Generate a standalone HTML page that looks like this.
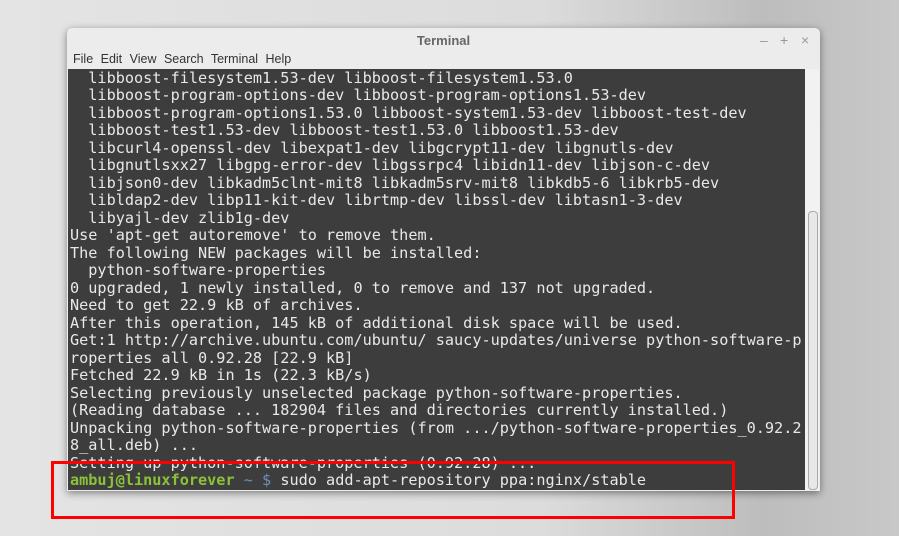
<!DOCTYPE html>
<html><head><style>
body{margin:0;width:899px;height:536px;overflow:hidden;background:linear-gradient(90deg,#e4e4e4 0%,#dcdcdc 60%,#bdbdbd 85%,#c8c8c8 100%);position:relative;font-family:"Liberation Sans",sans-serif}
.win{position:absolute;left:67px;top:28px;width:753px;height:463px;background:#ececec;border-radius:5px 5px 0 0;box-shadow:0 2px 8px rgba(0,0,0,.45)}
.title{position:absolute;left:0;right:0;top:5px;text-align:center;font-size:13px;font-weight:bold;color:#666}
.ctl{position:absolute;top:4px;font-size:14px;color:#999}
.menu{position:absolute;left:6px;top:24px;font-size:12.5px;color:#333;word-spacing:4px}
.term{position:absolute;left:1px;top:41px;width:737px;height:421px;background:#3d3d3d;overflow:hidden}
.sb{position:absolute;left:738px;top:41px;width:14px;height:421px;background:#f2f2f2}
.thumb{position:absolute;left:741px;top:183px;width:8px;height:277px;border:1px solid #aaa;border-radius:4px;background:#e8e8e8}
pre{margin:0;position:absolute;left:2px;top:1px;font-family:"DejaVu Sans Mono",monospace;font-size:15.2px;line-height:17.48px;color:#e8e8e8}
.g{color:#8ac33a;font-weight:bold}.b{color:#6b8fb8}
.red{position:absolute;left:51px;top:461px;width:678px;height:52px;border:3px solid #f00}
</style></head><body>
<div class="win">
<div class="title">Terminal</div>
<span class="ctl" style="left:693px">–</span><span class="ctl" style="left:713px">+</span><span class="ctl" style="left:734px">×</span>
<div class="menu">File Edit View Search Terminal Help</div>
<div class="term"><pre>  libboost-filesystem1.53-dev libboost-filesystem1.53.0
  libboost-program-options-dev libboost-program-options1.53-dev
  libboost-program-options1.53.0 libboost-system1.53-dev libboost-test-dev
  libboost-test1.53-dev libboost-test1.53.0 libboost1.53-dev
  libcurl4-openssl-dev libexpat1-dev libgcrypt11-dev libgnutls-dev
  libgnutlsxx27 libgpg-error-dev libgssrpc4 libidn11-dev libjson-c-dev
  libjson0-dev libkadm5clnt-mit8 libkadm5srv-mit8 libkdb5-6 libkrb5-dev
  libldap2-dev libp11-kit-dev librtmp-dev libssl-dev libtasn1-3-dev
  libyajl-dev zlib1g-dev
Use 'apt-get autoremove' to remove them.
The following NEW packages will be installed:
  python-software-properties
0 upgraded, 1 newly installed, 0 to remove and 137 not upgraded.
Need to get 22.9 kB of archives.
After this operation, 145 kB of additional disk space will be used.
Get:1 http://archive.ubuntu.com/ubuntu/ saucy-updates/universe python-software-p
roperties all 0.92.28 [22.9 kB]
Fetched 22.9 kB in 1s (22.3 kB/s)
Selecting previously unselected package python-software-properties.
(Reading database ... 182904 files and directories currently installed.)
Unpacking python-software-properties (from .../python-software-properties_0.92.2
8_all.deb) ...
Setting up python-software-properties (0.92.28) ...
<span class="g">ambuj@linuxforever</span> <span class="b">~ $</span> sudo add-apt-repository ppa:nginx/stable</pre></div>
<div class="sb"></div><div class="thumb"></div>
</div>
<div class="red"></div>
</body></html>
